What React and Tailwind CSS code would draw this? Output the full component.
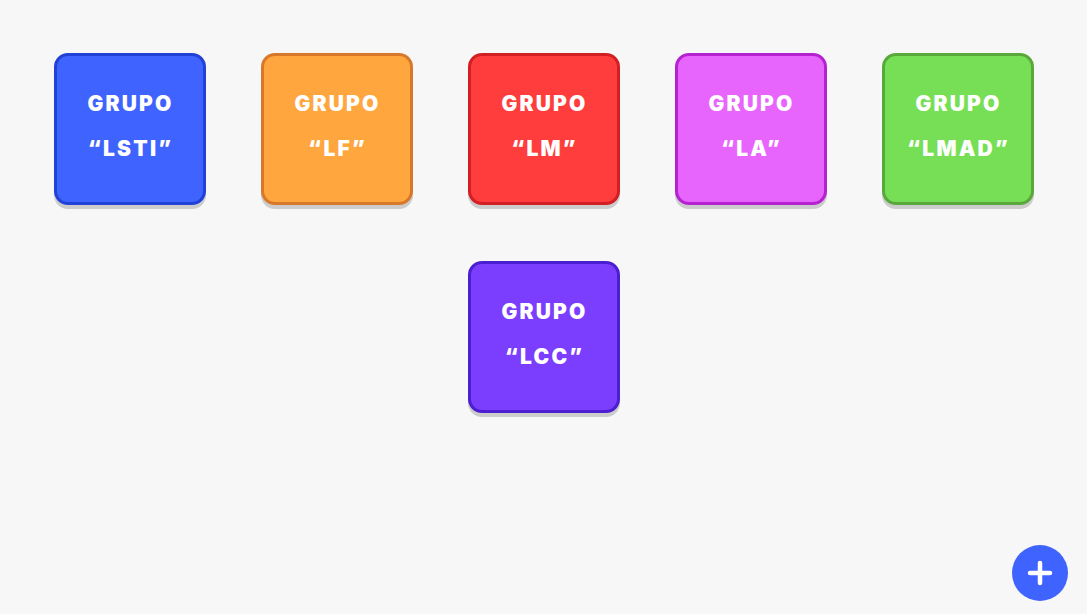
import React from "react";

const groups = [
  { name: "LSTI", cls: "bg-[#3f63fe] border-[#2241d6]" },
  { name: "LF", cls: "bg-[#ffa63f] border-[#d8782a]" },
  { name: "LM", cls: "bg-[#ff3d3d] border-[#d21f23]" },
  { name: "LA", cls: "bg-[#e865fd] border-[#b522d0]" },
  { name: "LMAD", cls: "bg-[#77df55] border-[#5aa83c]" },
  { name: "LCC", cls: "bg-[#7b3dfe] border-[#4b1fd0]" },
];

export default function App() {
  return (
    <div
      className="relative w-full h-[614px] bg-[#f7f7f7] overflow-hidden"
      style={{ fontFamily: "Inter, 'Noto Sans', sans-serif" }}
    >
      <div className="mx-auto w-[982px] pt-[53px] flex flex-wrap justify-center gap-x-[55px] gap-y-[56px]">
        {groups.map((g) => (
          <div
            key={g.name}
            className={`w-[152px] h-[152px] rounded-[14px] border-[3px] shadow-[0_4px_0_#cccccc] flex flex-col items-center justify-center gap-[19px] pb-[6px] text-white font-black text-[21px] leading-[26px] tracking-[2.2px] ${g.cls}`}
          >
            <span className="pl-[2px]">GRUPO</span>
            <span className="pl-[2px]">“{g.name}”</span>
          </div>
        ))}
      </div>
      <button className="absolute right-[19px] bottom-[13px] w-[56px] h-[56px] rounded-full bg-[#3f63fe] flex items-center justify-center">
        <svg width="26" height="26" viewBox="0 0 26 26" fill="none" stroke="white" strokeWidth="4.5" strokeLinecap="round">
          <path d="M13 3v20M3 13h20" />
        </svg>
      </button>
    </div>
  );
}
